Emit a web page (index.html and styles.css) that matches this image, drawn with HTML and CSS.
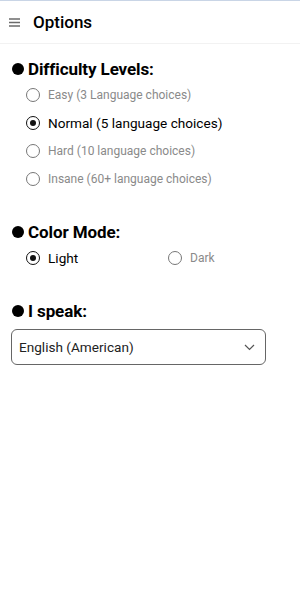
FILE: index.html
```html
<!DOCTYPE html>
<html>
  <head>
    <title>Options</title>
    <link rel="stylesheet" href="styles.css">
  </head>
  <body>
    <div class="topbar">
      <span class="menu">
        <svg width="11" height="9" viewBox="0 0 11 9"><path d="M0 1h11M0 4.5h11M0 8h11" stroke="#6b6b6b" stroke-width="1.5"/></svg>
      </span>
      <span class="title">Options</span>
    </div>

    <div class="content">
      <div class="section">
        <h2>Difficulty Levels:</h2>
        <div class="radio-list">
          <div class="radio"><span class="dot"></span><span class="label">Easy (3 Language choices)</span></div>
          <div class="radio checked"><span class="dot"></span><span class="label">Normal (5 language choices)</span></div>
          <div class="radio"><span class="dot"></span><span class="label">Hard (10 language choices)</span></div>
          <div class="radio"><span class="dot"></span><span class="label">Insane (60+ language choices)</span></div>
        </div>
      </div>

      <div class="section">
        <h2>Color Mode:</h2>
        <div class="radio-row">
          <div class="radio checked"><span class="dot"></span><span class="label">Light</span></div>
          <div class="radio"><span class="dot"></span><span class="label">Dark</span></div>
        </div>
      </div>

      <div class="section">
        <h2>I speak:</h2>
        <div class="select">
          <span>English (American)</span>
          <svg width="11" height="7" viewBox="0 0 11 7"><path d="M1 1l4.5 4.5L10 1" fill="none" stroke="#555" stroke-width="1.2"/></svg>
        </div>
      </div>
    </div>
  </body>
</html>
```

FILE: styles.css
```css
body {
  margin: 0;
  font-family: Roboto, "Liberation Sans", sans-serif;
  background: #fff;
  color: #000;
}

/* header */
.topbar {
  display: flex;
  align-items: center;
  height: 42px;
  border-top: 1px solid #c9d5e6;
  border-bottom: 1px solid #f2f2f2;
}
.topbar .menu {
  display: flex;
  padding-left: 9px;
  width: 24px;
}
.topbar .title {
  font-size: 17px;
  font-weight: 500;
}

/* sections */
.content {
  padding: 13px 0 0 12px;
}
.section + .section {
  margin-top: 27px;
}
.section h2 {
  display: flex;
  align-items: center;
  margin: 0;
  height: 24px;
  font-size: 17px;
  font-weight: 700;
  letter-spacing: -0.1px;
}
.section h2::before {
  content: "";
  width: 12px;
  height: 12px;
  border-radius: 50%;
  background: #000;
  margin-right: 4px;
}

/* radios */
.radio-list, .radio-row {
  padding-left: 14px;
}
.radio-row {
  display: grid;
  grid-template-columns: 142px auto;
}
.radio {
  display: flex;
  align-items: center;
  height: 28px;
  font-size: 12px;
  color: #8a8a8a;
}
.radio .dot {
  box-sizing: border-box;
  width: 14px;
  height: 14px;
  border: 1.4px solid #777;
  border-radius: 50%;
  margin-right: 8px;
  position: relative;
}
.radio.checked {
  font-size: 13.6px;
  color: #000;
}
.radio.checked .dot {
  border-color: #111;
}
.radio.checked .dot::after {
  content: "";
  position: absolute;
  top: 2.6px;
  left: 2.6px;
  width: 6px;
  height: 6px;
  border-radius: 50%;
  background: #111;
}

/* select */
.select {
  box-sizing: border-box;
  display: flex;
  align-items: center;
  justify-content: space-between;
  width: 255px;
  height: 36px;
  margin: 6px 0 0 -1px;
  padding: 0 10px 0 7px;
  border: 1px solid #666;
  border-radius: 6px;
  font-size: 13.6px;
  color: #222;
}
```
